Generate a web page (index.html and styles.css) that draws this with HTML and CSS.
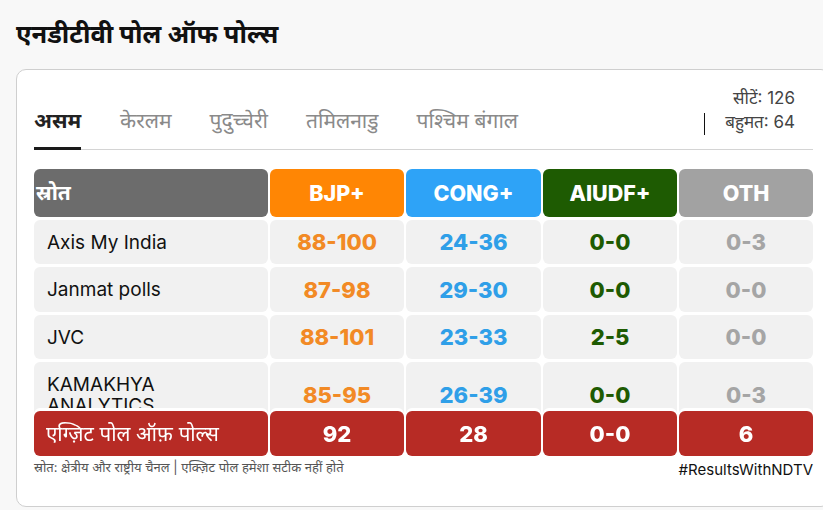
FILE: index.html
```html
<!DOCTYPE html>
<html lang="hi">
<head>
<meta charset="utf-8">
<title>एनडीटीवी पोल ऑफ पोल्स</title>
<link rel="stylesheet" href="styles.css">
</head>
<body>
<h1 class="page-title">एनडीटीवी पोल ऑफ पोल्स</h1>
<section class="card">
  <div class="top">
    <nav class="tabs">
      <span class="tab active">असम</span>
      <span class="tab">केरलम</span>
      <span class="tab">पुदुच्चेरी</span>
      <span class="tab">तमिलनाडु</span>
      <span class="tab">पश्चिम बंगाल</span>
    </nav>
    <div class="seats">
      <div class="seat-line">सीटें: 126</div>
      <div class="seat-line with-bar"><span class="bar"></span>बहुमत: 64</div>
    </div>
  </div>
  <div class="table-wrap">
    <div class="grid">
      <div class="cell head src">स्रोत</div>
      <div class="cell head bjp">BJP+</div>
      <div class="cell head cong">CONG+</div>
      <div class="cell head aiudf">AIUDF+</div>
      <div class="cell head oth">OTH</div>

      <div class="cell name">Axis My India</div>
      <div class="cell num t-bjp">88-100</div>
      <div class="cell num t-cong">24-36</div>
      <div class="cell num t-aiudf">0-0</div>
      <div class="cell num t-oth">0-3</div>

      <div class="cell name">Janmat polls</div>
      <div class="cell num t-bjp">87-98</div>
      <div class="cell num t-cong">29-30</div>
      <div class="cell num t-aiudf">0-0</div>
      <div class="cell num t-oth">0-0</div>

      <div class="cell name">JVC</div>
      <div class="cell num t-bjp">88-101</div>
      <div class="cell num t-cong">23-33</div>
      <div class="cell num t-aiudf">2-5</div>
      <div class="cell num t-oth">0-0</div>

      <div class="cell name">KAMAKHYA ANALYTICS</div>
      <div class="cell num t-bjp">85-95</div>
      <div class="cell num t-cong">26-39</div>
      <div class="cell num t-aiudf">0-0</div>
      <div class="cell num t-oth">0-3</div>

      <div class="cell tot label">एग्ज़िट पोल ऑफ़ पोल्स</div>
      <div class="cell tot num">92</div>
      <div class="cell tot num">28</div>
      <div class="cell tot num">0-0</div>
      <div class="cell tot num">6</div>
    </div>
  </div>
  <div class="foot">
    <span class="note">स्रोत: क्षेत्रीय और राष्ट्रीय चैनल | एक्ज़िट पोल हमेशा सटीक नहीं होते</span>
    <span class="tag">#ResultsWithNDTV</span>
  </div>
</section>
</body>
</html>
```

FILE: styles.css
```css
html, body {
  margin: 0;
  padding: 0;
}
body {
  background: #f8f8f8;
  font-family: Inter, "Noto Sans", "Noto Sans Devanagari", sans-serif;
  color: #111;
  overflow: hidden;
  width: 823px;
  height: 510px;
  padding: 0 0 0 16px;
  box-sizing: border-box;
}
.page-title {
  margin: 0;
  padding-top: 17px;
  height: 69px;
  box-sizing: border-box;
  font-size: 25.5px;
  font-weight: 700;
  line-height: 34px;
  color: #111;
}
.card {
  width: 815px;
  box-sizing: border-box;
  background: #fff;
  border: 1px solid #cfcfcf;
  border-radius: 10px;
  padding: 0 17px;
  height: 438px;
}
.top {
  display: flex;
  justify-content: space-between;
  align-items: flex-end;
  border-bottom: 1px solid #d4d4d4;
  height: 80px;
  box-sizing: border-box;
}
.tabs {
  display: flex;
  gap: 38px;
}
.tab {
  font-size: 21px;
  color: #8a8a8a;
  padding-bottom: 12px;
  line-height: 28px;
  border-bottom: 3px solid transparent;
  margin-bottom: -1px;
}
.tab:first-child {
  margin-right: 1px;
}
.tab.active {
  color: #222;
  font-weight: 700;
  border-bottom-color: #1a1a1a;
}
.seats {
  align-self: flex-start;
  margin-top: 16px;
  margin-right: 18px;
  text-align: right;
  font-size: 17px;
  line-height: 24px;
  color: #444;
}
.seat-line.with-bar {
  display: flex;
  align-items: center;
  gap: 20px;
}
.bar {
  width: 1px;
  height: 22px;
  background: #111;
  position: relative;
  top: 2px;
}
.table-wrap {
  margin-top: 19px;
  height: 287px;
  overflow: hidden;
}
.grid {
  display: grid;
  grid-template-columns: 234px 134px 135px 134px 134px;
  grid-template-rows: 48px 44px 45px 44px 66px 45px;
  gap: 3px 2px;
}
.cell {
  background: #f1f1f1;
  border-radius: 6px;
  display: flex;
  align-items: center;
  justify-content: center;
  line-height: 24px;
}
.head {
  color: #fff;
  font-size: 21.5px;
  font-weight: 800;
}
.head.src {
  background: #6c6c6c;
  justify-content: flex-start;
  padding-left: 2px;
  font-weight: 700;
  font-size: 21px;
}
.head.bjp { background: #ff8604; }
.head.cong { background: #2ea3f7; }
.head.aiudf { background: #1e5b02; }
.head.oth { background: #a2a2a2; }
.name {
  justify-content: flex-start;
  padding: 0 13px;
  font-size: 19px;
  line-height: 21px;
  color: #111;
}
.num {
  font-size: 22px;
  font-weight: 800;
}
.t-bjp { color: #f28a25; }
.t-cong { color: #2f9fe8; }
.t-aiudf { color: #1e5b02; }
.t-oth { color: #a5a5a5; }
.tot {
  background: #b72b25;
  color: #fff;
  position: sticky;
  bottom: 0;
  box-shadow: 0 -3px 0 #fff;
}
.tot.label {
  justify-content: flex-start;
  padding-left: 12px;
  font-size: 20.5px;
  font-weight: 400;
}
.foot {
  display: flex;
  justify-content: space-between;
  align-items: flex-start;
  padding-top: 2px;
}
.note {
  font-size: 13px;
  color: #555;
  line-height: 18px;
}
.tag {
  font-size: 15px;
  color: #111;
  line-height: 20px;
  padding-top: 2px;
}
```
